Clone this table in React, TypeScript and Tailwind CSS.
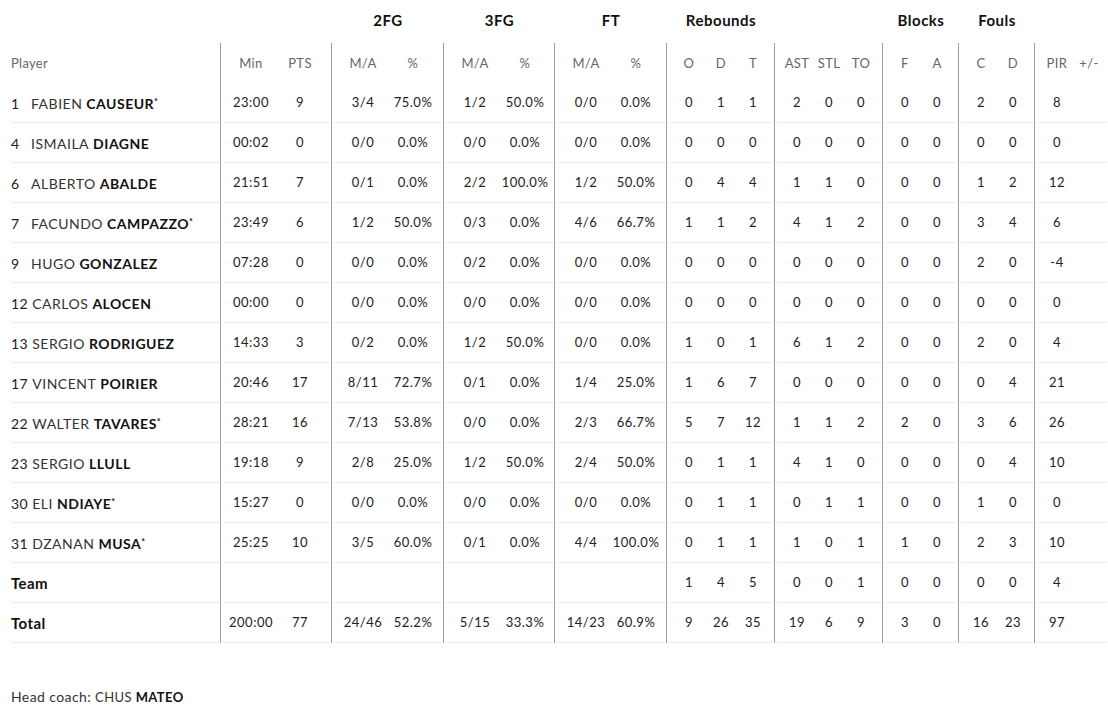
import React from 'react'

type Row = {
  no?: string
  first?: string
  last?: string
  label?: string
  starter?: boolean
  stats: string[]
}

const groups = [
  { title: '', w: 'w-[111px]', cells: ['w-[48px]', 'w-[50px]'], heads: ['Min', 'PTS'] },
  { title: '2FG', w: 'w-[112px]', cells: ['w-[50px]', 'w-[50px]'], heads: ['M/A', '%'] },
  { title: '3FG', w: 'w-[111px]', cells: ['w-[50px]', 'w-[50px]'], heads: ['M/A', '%'] },
  { title: 'FT', w: 'w-[112px]', cells: ['w-[50px]', 'w-[50px]'], heads: ['M/A', '%'] },
  { title: 'Rebounds', w: 'w-[108px]', cells: ['w-[32px]', 'w-[32px]', 'w-[32px]'], heads: ['O', 'D', 'T'] },
  { title: '', w: 'w-[108px]', cells: ['w-[32px]', 'w-[32px]', 'w-[32px]'], heads: ['AST', 'STL', 'TO'] },
  { title: 'Blocks', w: 'w-[76px]', cells: ['w-[32px]', 'w-[32px]'], heads: ['F', 'A'] },
  { title: 'Fouls', w: 'w-[76px]', cells: ['w-[32px]', 'w-[32px]'], heads: ['C', 'D'] },
  { title: '', w: 'w-[74px]', cells: ['w-[32px]', 'w-[32px]'], heads: ['PIR', '+/-'] },
]

// '_' marks an empty cell
const s = (t: string) => t.split(' ').map((v) => (v === '_' ? '' : v))

const rows: Row[] = [
  { no: '1', first: 'FABIEN', last: 'CAUSEUR', starter: true, stats: s('23:00 9 3/4 75.0% 1/2 50.0% 0/0 0.0% 0 1 1 2 0 0 0 0 2 0 8 _') },
  { no: '4', first: 'ISMAILA', last: 'DIAGNE', stats: s('00:02 0 0/0 0.0% 0/0 0.0% 0/0 0.0% 0 0 0 0 0 0 0 0 0 0 0 _') },
  { no: '6', first: 'ALBERTO', last: 'ABALDE', stats: s('21:51 7 0/1 0.0% 2/2 100.0% 1/2 50.0% 0 4 4 1 1 0 0 0 1 2 12 _') },
  { no: '7', first: 'FACUNDO', last: 'CAMPAZZO', starter: true, stats: s('23:49 6 1/2 50.0% 0/3 0.0% 4/6 66.7% 1 1 2 4 1 2 0 0 3 4 6 _') },
  { no: '9', first: 'HUGO', last: 'GONZALEZ', stats: s('07:28 0 0/0 0.0% 0/2 0.0% 0/0 0.0% 0 0 0 0 0 0 0 0 2 0 -4 _') },
  { no: '12', first: 'CARLOS', last: 'ALOCEN', stats: s('00:00 0 0/0 0.0% 0/0 0.0% 0/0 0.0% 0 0 0 0 0 0 0 0 0 0 0 _') },
  { no: '13', first: 'SERGIO', last: 'RODRIGUEZ', stats: s('14:33 3 0/2 0.0% 1/2 50.0% 0/0 0.0% 1 0 1 6 1 2 0 0 2 0 4 _') },
  { no: '17', first: 'VINCENT', last: 'POIRIER', stats: s('20:46 17 8/11 72.7% 0/1 0.0% 1/4 25.0% 1 6 7 0 0 0 0 0 0 4 21 _') },
  { no: '22', first: 'WALTER', last: 'TAVARES', starter: true, stats: s('28:21 16 7/13 53.8% 0/0 0.0% 2/3 66.7% 5 7 12 1 1 2 2 0 3 6 26 _') },
  { no: '23', first: 'SERGIO', last: 'LLULL', stats: s('19:18 9 2/8 25.0% 1/2 50.0% 2/4 50.0% 0 1 1 4 1 0 0 0 0 4 10 _') },
  { no: '30', first: 'ELI', last: 'NDIAYE', starter: true, stats: s('15:27 0 0/0 0.0% 0/0 0.0% 0/0 0.0% 0 1 1 0 1 1 0 0 1 0 0 _') },
  { no: '31', first: 'DZANAN', last: 'MUSA', starter: true, stats: s('25:25 10 3/5 60.0% 0/1 0.0% 4/4 100.0% 0 1 1 1 0 1 1 0 2 3 10 _') },
  { label: 'Team', stats: s('_ _ _ _ _ _ _ _ 1 4 5 0 0 1 0 0 0 0 4 _') },
  { label: 'Total', stats: s('200:00 77 24/46 52.2% 5/15 33.3% 14/23 60.9% 9 26 35 19 6 9 3 0 16 23 97 _') },
]

function splitStats(stats: string[]) {
  const out: string[][] = []
  let i = 0
  for (const g of groups) {
    out.push(stats.slice(i, i + g.cells.length))
    i += g.cells.length
  }
  return out
}

function PlayerCell({ row }: { row: Row }) {
  return (
    <div className="w-[220px] h-[40px] pl-[11px] pr-[1px]">
      <div className="h-full border-b border-[#ececec] flex items-center whitespace-nowrap pt-[1px]">
        {row.label ? (
          <span className="text-[15px] font-bold text-[#111] tracking-[0.4px]">{row.label}</span>
        ) : (
          <>
            <span className="inline-block min-w-[16px] mr-[4px] text-[14px] text-[#222] tracking-[0.5px]">{row.no}</span>
            <span className="text-[14px] text-[#333] tracking-[0.5px]">{row.first}</span>
            <span className="text-[14px] font-bold text-[#111] ml-[4px] tracking-[0.5px]">{row.last}</span>
            {row.starter && <span className="text-[9px] text-[#111] self-start mt-[11px] font-bold">*</span>}
          </>
        )}
      </div>
    </div>
  )
}

export default function App() {
  return (
    <div className="w-[1108px] bg-white text-[#222]" style={{ fontFamily: 'Lato, "Open Sans", sans-serif' }}>
      {/* group titles */}
      <div className="flex h-[43px] items-center pb-[2px]">
        <div className="w-[220px]" />
        {groups.map((g, i) => (
          <div key={i} className={`${g.w} pl-[7px] flex`}>
            <div className="flex-1 pr-[5px] text-center text-[15px] font-bold text-[#111] tracking-[0.5px]">{g.title}</div>
          </div>
        ))}
      </div>

      {/* column heads */}
      <div className="flex h-[40px]">
        <div className="w-[220px] pl-[11px] flex items-center text-[13px] text-[#666] tracking-[0.3px] pt-[1px]">Player</div>
        {groups.map((g, i) => (
          <div key={i} className={`${g.w} border-l border-[#9e9e9e] pl-[6px] flex items-center pt-[1px]`}>
            {g.heads.map((h, j) => (
              <div key={j} className={`${g.cells[j]} text-center text-[13px] text-[#666] tracking-[0.4px]`}>{h}</div>
            ))}
          </div>
        ))}
      </div>

      {rows.map((row, r) => (
        <div key={r} className="flex">
          <PlayerCell row={row} />
          {splitStats(row.stats).map((vals, i) => (
            <div key={i} className={`${groups[i].w} h-[40px] border-l border-[#9e9e9e]`}>
              <div className="h-full ml-[3px] mr-[1px] pl-[3px] pt-[1px] border-b border-[#ececec] flex items-center">
                {vals.map((v, j) => (
                  <div key={j} className={`${groups[i].cells[j]} text-center text-[13px] text-[#222] tracking-[0.5px]`}>{v}</div>
                ))}
              </div>
            </div>
          ))}
        </div>
      ))}

      <div className="mt-[44px] pl-[11px] leading-[18px] pb-[15px] tracking-[0.4px]">
        <span className="text-[14px] text-[#333]">Head coach: </span>
        <span className="text-[13px] text-[#333]">CHUS </span>
        <span className="text-[13px] font-bold text-[#111]">MATEO</span>
      </div>
    </div>
  )
}
